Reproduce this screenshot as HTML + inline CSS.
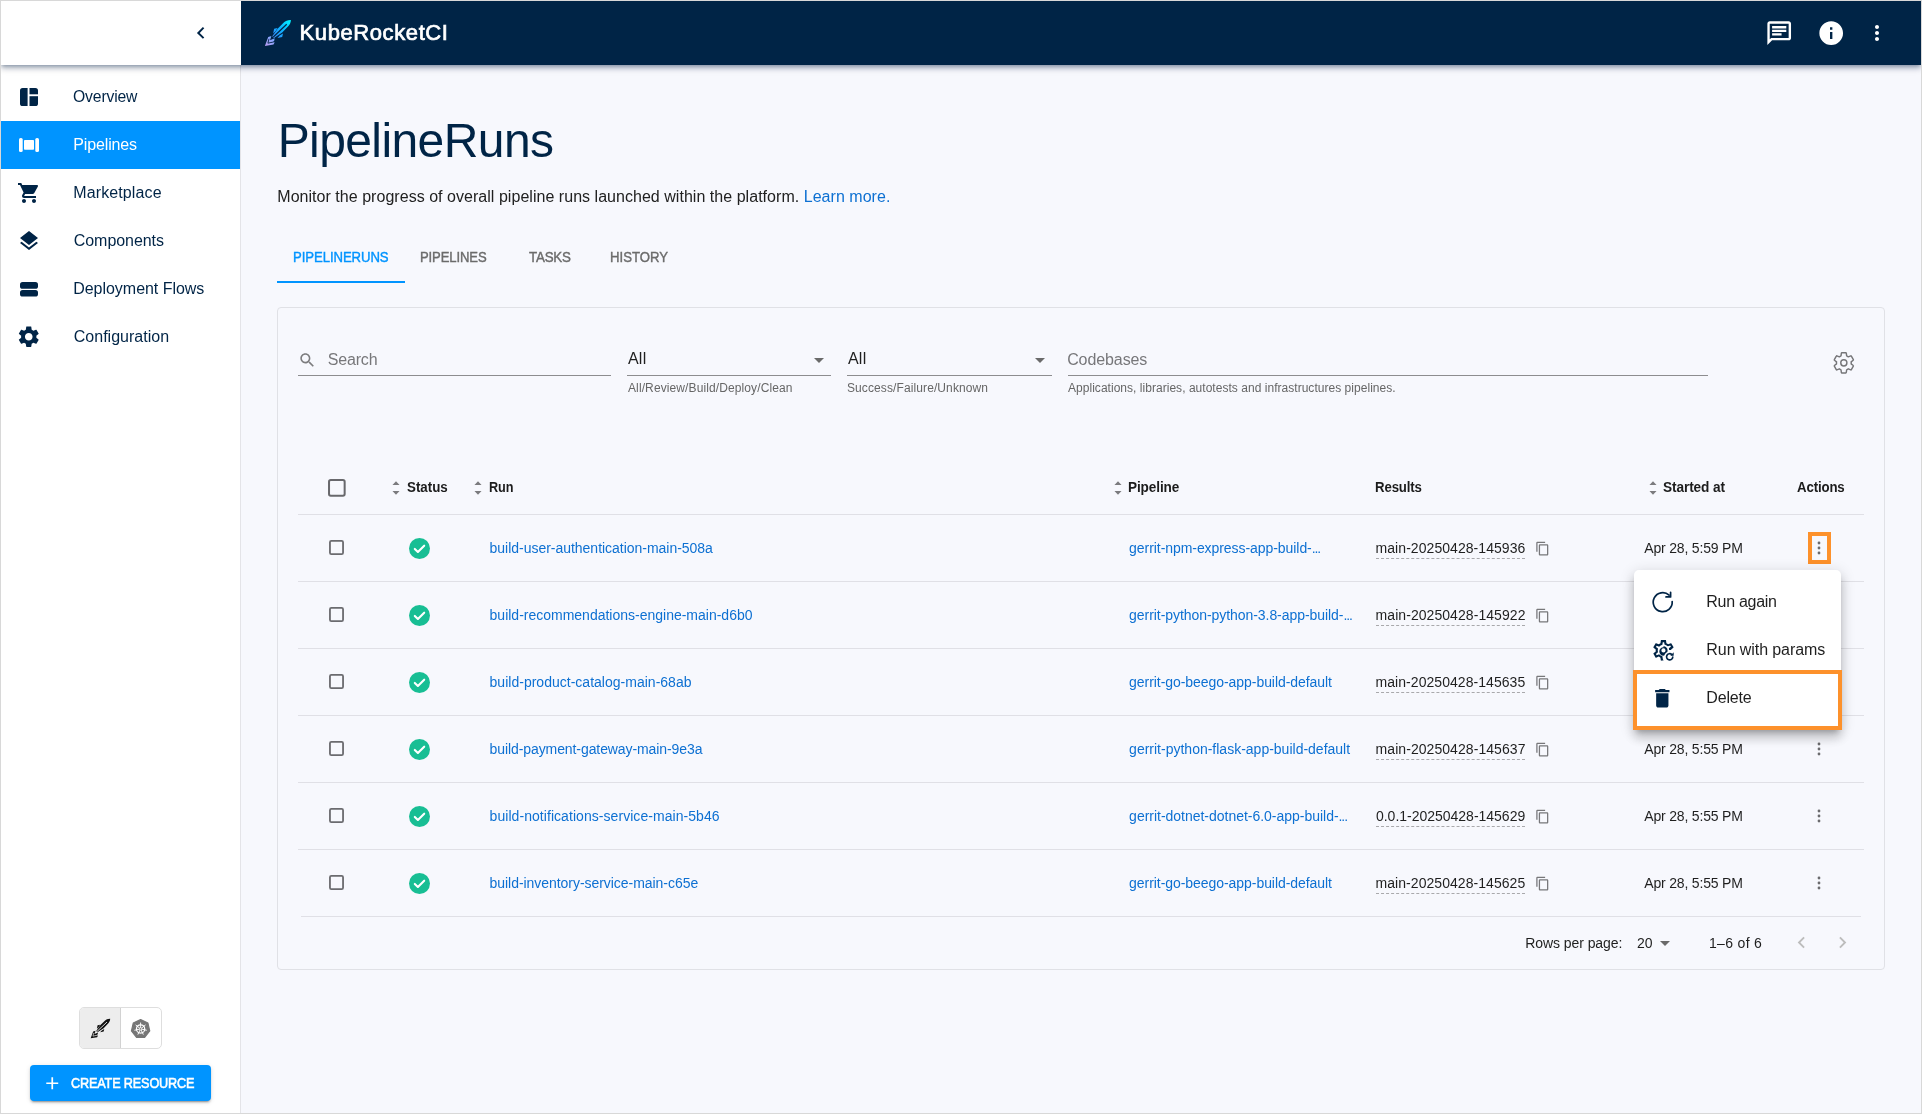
<!DOCTYPE html>
<html lang="en"><head><meta charset="utf-8"><title>KubeRocketCI - PipelineRuns</title>
<style>
html,body{margin:0;padding:0;background:#fff}
body{width:1922px;height:1114px;overflow:hidden;position:relative;font-family:"Liberation Sans", Arial, sans-serif;}
#frame{position:absolute;left:0;top:0;width:1922px;height:1114px;overflow:hidden;background:#f7f8fd;will-change:transform}
#frame div,#frame span.t,#frame svg.ic{position:absolute}
.t{white-space:nowrap;line-height:1;}
.ic{display:block;overflow:visible}
#edge{left:0;top:0;width:1920px;height:1112px;border:1px solid #d8d8d8;z-index:50}
.hl{height:1px;background:#e0e0e6}
.ul{height:1px;background:#8d8d8f}
.cb{box-sizing:border-box;border:1.9px solid #636367;border-radius:2.500px}

</style></head><body><div id="frame">
<div style="left:1px;top:1px;width:1920px;height:64px;background:#002446;box-shadow:0 2px 4px -1px rgba(0,28,64,.34),0 4px 5px 0 rgba(0,28,64,.17),0 1px 10px 0 rgba(0,28,64,.13);z-index:5"></div>
<div style="left:1px;top:65px;width:239px;height:1048px;background:#fff;border-right:1px solid #e4e4e8;z-index:1"></div>
<div style="left:1px;top:1px;width:240px;height:64px;background:#fff;z-index:6"></div>
<div style="left:0;top:0;width:1922px;height:66px;z-index:7">
<svg class="ic" style="left:188.70px;top:20.90px;width:23.80px;height:23.80px;" viewBox="0 0 24 24"><path fill="#002446" d="M15.41 7.41L14 6l-6 6 6 6 1.41-1.41L10.83 12z"/></svg>
<svg class="ic" style="left:260.00px;top:15.00px;width:36.00px;height:36.00px" viewBox="0 0 36 36"><defs><linearGradient id="rg" gradientUnits="userSpaceOnUse" x1="30.700" y1="5.200" x2="5" y2="30.800"><stop offset="0" stop-color="#00f5ff"/><stop offset=".33" stop-color="#0ab6ff"/><stop offset=".6" stop-color="#2b94ff"/><stop offset=".74" stop-color="#8aa6ff"/><stop offset="1" stop-color="#bb9cf0"/></linearGradient></defs>
<g fill="url(#rg)"><path d="M30.900 5c-3.300-.1-5.400 1-7.100 2.600L17.600 13.800 12.300 21.300l1.700 1.700 8.200-5.400 6-6.300c1.600-1.700 2.700-3.700 2.700-6.300z"/>
<path d="M17.600 12.900l-3.500.8-.9 4.700 2.300-2.200zM23 18.500l-.8 3.500-4.700.9 2.200-2.300z"/>
<path d="M4.900 31l3.300-9.100 3.200-.9-1.400 4.300 4.700-2.100-.6 2.700-3.100 1.800 3.700-.4-1.200 2.300z"/></g>
<path d="M26.700 9.300L13.300 22" stroke="#002446" stroke-width="1.200" fill="none"/>
<path d="M9 23.800l-1.100 4.400 4.500-1" stroke="#002446" stroke-width=".9" fill="none"/>
</svg>
<svg class="ic" style="left:1764.80px;top:18.80px;width:28.40px;height:28.40px;" viewBox="0 0 24 24"><path fill="#fff" d="M4 4h16v12H5.17L4 17.17V4m0-2c-1.1 0-1.99.9-1.99 2L2 22l4-4h14c1.1 0 2-.9 2-2V4c0-1.1-.9-2-2-2H4zm2 10h8v2H6v-2zm0-3h12v2H6V9zm0-3h12v2H6V6z"/></svg>
<svg class="ic" style="left:1816.80px;top:18.80px;width:28.40px;height:28.40px;" viewBox="0 0 24 24"><path fill="#fff" d="M12 2C6.48 2 2 6.48 2 12s4.48 10 10 10 10-4.48 10-10S17.52 2 12 2zm1 15h-2v-6h2v6zm0-8h-2V7h2v2z"/></svg>
<svg class="ic" style="left:1865.00px;top:21.20px;width:24.00px;height:24.00px;" viewBox="0 0 24 24"><path fill="#fff" d="M12 8c1.1 0 2-.9 2-2s-.9-2-2-2-2 .9-2 2 .9 2 2 2zm0 2c-1.1 0-2 .9-2 2s.9 2 2 2 2-.9 2-2-.9-2-2-2zm0 6c-1.1 0-2 .9-2 2s.9 2 2 2 2-.9 2-2-.9-2-2-2z"/></svg>
</div>
<div style="left:1px;top:121px;width:239px;height:48px;background:#0094ff;z-index:2"></div>
<div style="left:0;top:0;width:241px;height:1114px;z-index:3">
<svg class="ic" style="left:20px;top:88px;width:18px;height:18px" viewBox="0 0 18 18"><rect width="18" height="18" rx="2.600" fill="#002446"/><rect x="7.600" y="0" width="1.900" height="18" fill="#fff"/><rect x="9" y="6.300" width="9" height="1.900" fill="#fff"/></svg>
<svg class="ic" style="left:19px;top:137px;width:20px;height:16px" viewBox="0 0 20 16"><rect x="0" y="1" width="3.700" height="14" rx="1.600" fill="#fff"/><rect x="16.300" y="1" width="3.700" height="14" rx="1.600" fill="#fff"/><rect x="5" y="3" width="10" height="9.800" rx=".8" fill="#fff"/></svg>
<svg class="ic" style="left:17.00px;top:181.00px;width:24.00px;height:24.00px;" viewBox="0 0 24 24"><path fill="#002446" d="M7 18c-1.1 0-1.99.9-1.99 2S5.9 22 7 22s2-.9 2-2-.9-2-2-2zM1 2v2h2l3.6 7.59-1.35 2.45c-.16.28-.25.61-.25.96 0 1.1.9 2 2 2h12v-2H7.42c-.14 0-.25-.11-.25-.25l.03-.12.9-1.63h7.45c.75 0 1.41-.41 1.75-1.03l3.58-6.49c.08-.14.12-.31.12-.48 0-.55-.45-1-1-1H5.21l-.94-2H1zm16 16c-1.1 0-1.99.9-1.99 2s.89 2 1.99 2 2-.9 2-2-.9-2-2-2z"/></svg>
<svg class="ic" style="left:17.00px;top:228.50px;width:24.00px;height:24.00px;" viewBox="0 0 24 24"><path fill="#002446" d="M11.99 18.54l-7.37-5.73L3 14.07l9 7 9-7-1.63-1.27-7.38 5.740zM12 16l7.36-5.73L21 9l-9-7-9 7 1.63 1.27L12 16z"/></svg>
<svg class="ic" style="left:20px;top:282px;width:18px;height:14.500px" viewBox="0 0 18 14.500"><rect width="18" height="6.800" rx="2.600" fill="#002446"/><rect y="7.900" width="18" height="6.600" rx="2.600" fill="#002446"/></svg>
<svg class="ic" style="left:16.25px;top:324.25px;width:25.50px;height:25.50px;" viewBox="0 0 24 24"><path fill="#002446" d="M19.14 12.94c.04-.3.06-.61.06-.94 0-.32-.02-.64-.07-.94l2.03-1.58c.18-.14.23-.41.12-.61l-1.92-3.32c-.12-.22-.37-.29-.59-.22l-2.39.96c-.5-.38-1.03-.7-1.62-.94l-.36-2.54c-.04-.24-.24-.41-.48-.41h-3.84c-.24 0-.43.17-.47.41l-.36 2.54c-.59.24-1.13.57-1.62.94l-2.39-.96c-.22-.08-.47 0-.59.22L2.74 8.87c-.12.21-.08.47.12.61l2.03 1.58c-.05.3-.09.63-.09.94s.02.64.07.94l-2.03 1.58c-.18.14-.23.41-.12.61l1.92 3.32c.12.22.37.29.59.22l2.39-.96c.5.38 1.03.7 1.62.94l.36 2.54c.05.24.24.41.48.41h3.84c.24 0 .44-.17.47-.41l.36-2.54c.59-.24 1.13-.56 1.62-.94l2.39.96c.22.08.47 0 .59-.22l1.92-3.32c.12-.22.07-.47-.12-.61l-2.01-1.58zM12 15.6c-1.98 0-3.6-1.62-3.6-3.600s1.62-3.600 3.6-3.600 3.600 1.620 3.600 3.600-1.620 3.600-3.600 3.600z"/></svg>
<div style="left:79px;top:1007px;width:83px;height:42px;box-sizing:border-box;border:1px solid #dedede;border-radius:5px;background:#fff;overflow:hidden"><div style="left:0;top:0;width:40px;height:40px;background:#ededed;border-right:1px solid #d2d2d2"></div></div>
<svg class="ic" style="left:86.50px;top:1014.50px;width:27.00px;height:27.00px" viewBox="0 0 36 36">
<g fill="#111"><path d="M30.900 5c-3.300-.1-5.400 1-7.100 2.600L17.600 13.800 12.300 21.300l1.700 1.700 8.200-5.400 6-6.300c1.600-1.700 2.700-3.700 2.700-6.300z"/>
<path d="M17.600 12.900l-3.500.8-.9 4.700 2.300-2.200zM23 18.500l-.8 3.500-4.700.9 2.200-2.300z"/>
<path d="M4.900 31l3.300-9.100 3.200-.9-1.400 4.300 4.700-2.100-.6 2.700-3.100 1.800 3.700-.4-1.200 2.300z"/></g>
<path d="M26.700 9.300L13.300 22" stroke="#ededed" stroke-width="1.200" fill="none"/>
<path d="M9 23.800l-1.100 4.400 4.500-1" stroke="#ededed" stroke-width=".9" fill="none"/>
</svg>
<svg class="ic" style="left:131.200px;top:1019px;width:19.200px;height:19.200px" viewBox="0 0 20 20"><polygon points="10.00,0.50 17.66,4.19 19.55,12.48 14.25,19.13 5.75,19.13 0.45,12.48 2.34,4.19" fill="#767676" stroke="#767676" stroke-width="1.200" stroke-linejoin="round"/><circle cx="10" cy="10.300" r="4.300" fill="none" stroke="#fff" stroke-width="1.300"/><path d="M10 10.300L10.00 3.70M10 10.300L15.16 6.18M10 10.300L16.43 11.77M10 10.300L12.86 16.25M10 10.300L7.14 16.25M10 10.300L3.57 11.77M10 10.300L4.84 6.18" stroke="#fff" stroke-width="1" fill="none"/><circle cx="10" cy="10.300" r="1.200" fill="#767676" stroke="#fff" stroke-width=".7"/></svg>
<div style="left:30px;top:1065px;width:181px;height:36px;border-radius:4px;background:#0094ff;box-shadow:0 3px 1px -2px rgba(0,0,0,.2),0 2px 2px 0 rgba(0,0,0,.14),0 1px 5px 0 rgba(0,0,0,.12)"></div>
<svg class="ic" style="left:41.75px;top:1072.75px;width:20.50px;height:20.50px;" viewBox="0 0 24 24"><path fill="#fff" d="M19 13h-6v6h-2v-6H5v-2h6V5h2v6h6v2z"/></svg>
</div>
<div id="main" style="left:0;top:0;width:1922px;height:1114px;z-index:2">
<div style="left:277px;top:281px;width:128px;height:2px;background:#0094ff"></div>
<div style="left:277px;top:307px;width:1608px;height:662.500px;box-sizing:border-box;border:1px solid #e0e1e6;border-radius:4px"></div>
<svg class="ic" style="left:298.10px;top:351.10px;width:18.60px;height:18.60px;" viewBox="0 0 24 24"><path fill="#7c7c7e" d="M15.5 14h-.79l-.28-.27C15.41 12.59 16 11.11 16 9.5 16 5.91 13.09 3 9.5 3S3 5.91 3 9.5 5.91 16 9.5 16c1.61 0 3.09-.59 4.23-1.57l.27.28v.79l5 4.99L20.49 19l-4.99-5zm-6 0C7.01 14 5 11.99 5 9.5S7.01 5 9.5 5 14 7.01 14 9.5 11.99 14 9.5 14z"/></svg>
<div class="ul" style="left:298px;top:375px;width:313px"></div>
<div class="ul" style="left:627px;top:375px;width:204px"></div>
<div class="ul" style="left:847px;top:375px;width:205px"></div>
<div class="ul" style="left:1068px;top:375px;width:640px"></div>
<svg class="ic" style="left:807.00px;top:348.00px;width:24.00px;height:24.00px;" viewBox="0 0 24 24"><path fill="#6a6a6a" d="M7 10l5 5 5-5z"/></svg>
<svg class="ic" style="left:1027.70px;top:348.00px;width:24.00px;height:24.00px;" viewBox="0 0 24 24"><path fill="#6a6a6a" d="M7 10l5 5 5-5z"/></svg>
<svg class="ic" style="left:1831px;top:350px;width:24.600px;height:25.200px" viewBox="0 0 24 24" preserveAspectRatio="none"><g transform="translate(.52 .26)"><path fill="none" stroke="#757578" stroke-width="1.400" stroke-linejoin="round" d="M19.14 12.94c.04-.3.06-.61.06-.94 0-.32-.02-.64-.07-.94l2.03-1.58c.18-.14.23-.41.12-.61l-1.92-3.32c-.12-.22-.37-.29-.59-.22l-2.39.96c-.5-.38-1.03-.7-1.62-.94l-.36-2.54c-.04-.24-.24-.41-.48-.41h-3.84c-.24 0-.43.17-.47.41l-.36 2.54c-.59.24-1.13.57-1.62.94l-2.39-.96c-.22-.08-.47 0-.59.22L2.74 8.87c-.12.21-.08.47.12.61l2.03 1.58c-.05.3-.09.63-.09.94s.02.64.07.94l-2.03 1.58c-.18.14-.23.41-.12.61l1.92 3.32c.12.22.37.29.59.22l2.39-.96c.5.38 1.03.7 1.62.94l.36 2.54c.05.24.24.41.48.41h3.84c.24 0 .44-.17.47-.41l.36-2.54c.59-.24 1.13-.56 1.62-.94l2.39.96c.22.08.47 0 .59-.22l1.92-3.32c.12-.22.07-.47-.12-.61l-2.01-1.58z"/><circle cx="12" cy="12" r="3" fill="none" stroke="#757578" stroke-width="1.400"/></g></svg>
<svg class="ic" style="left:328.300px;top:479.200px;width:17.700px;height:17.700px" viewBox="0 0 18 18"><rect x="1.050" y="1.050" width="15.900" height="15.900" rx="1.800" fill="none" stroke="#68686c" stroke-width="2.050"/></svg>
<svg class="ic" style="left:392.05px;top:481px;width:8px;height:14px" viewBox="0 0 8 14"><path fill="#7b7b7e" d="M.45 4L7.550 4 4 .2zM.45 10L7.550 10 4 13.800z"/></svg>
<svg class="ic" style="left:474.40px;top:481px;width:8px;height:14px" viewBox="0 0 8 14"><path fill="#7b7b7e" d="M.45 4L7.550 4 4 .2zM.45 10L7.550 10 4 13.800z"/></svg>
<svg class="ic" style="left:1113.60px;top:481px;width:8px;height:14px" viewBox="0 0 8 14"><path fill="#7b7b7e" d="M.45 4L7.550 4 4 .2zM.45 10L7.550 10 4 13.800z"/></svg>
<svg class="ic" style="left:1649.20px;top:481px;width:8px;height:14px" viewBox="0 0 8 14"><path fill="#7b7b7e" d="M.45 4L7.550 4 4 .2zM.45 10L7.550 10 4 13.800z"/></svg>
<div class="hl" style="left:298px;top:514px;width:1566px"></div>
<div class="hl" style="left:298px;top:581px;width:1566px"></div>
<svg class="ic" style="left:329.200px;top:540.4px;width:15px;height:15px" viewBox="0 0 15 15"><rect x=".95" y=".95" width="13.100" height="13.100" rx="1.400" fill="none" stroke="#6b6b6f" stroke-width="1.800"/></svg>
<svg class="ic" style="left:409px;top:537.8px;width:21px;height:21px" viewBox="0 0 21 21"><circle cx="10.500" cy="10.500" r="10.500" fill="#18be94"/><path d="M5.800 10.900l3.100 3.100 6.300-6.300" fill="none" stroke="#fff" stroke-width="2.100" stroke-linecap="round" stroke-linejoin="round"/></svg>
<div style="left:1376px;top:558px;width:149px;height:0;border-top:1px dashed #a9a9ac"></div>
<svg class="ic" style="left:1535.20px;top:541.10px;width:15.20px;height:15.20px;" viewBox="0 0 24 24"><path fill="#77777a" d="M16 1H4c-1.1 0-2 .9-2 2v14h2V3h12V1zm3 4H8c-1.1 0-2 .9-2 2v14c0 1.1.9 2 2 2h11c1.1 0 2-.9 2-2V7c0-1.1-.9-2-2-2zm0 16H8V7h11v14z"/></svg>
<div class="hl" style="left:298px;top:648px;width:1566px"></div>
<svg class="ic" style="left:329.200px;top:607.4px;width:15px;height:15px" viewBox="0 0 15 15"><rect x=".95" y=".95" width="13.100" height="13.100" rx="1.400" fill="none" stroke="#6b6b6f" stroke-width="1.800"/></svg>
<svg class="ic" style="left:409px;top:604.8px;width:21px;height:21px" viewBox="0 0 21 21"><circle cx="10.500" cy="10.500" r="10.500" fill="#18be94"/><path d="M5.800 10.900l3.100 3.100 6.300-6.300" fill="none" stroke="#fff" stroke-width="2.100" stroke-linecap="round" stroke-linejoin="round"/></svg>
<div style="left:1376px;top:625px;width:149px;height:0;border-top:1px dashed #a9a9ac"></div>
<svg class="ic" style="left:1535.20px;top:608.10px;width:15.20px;height:15.20px;" viewBox="0 0 24 24"><path fill="#77777a" d="M16 1H4c-1.1 0-2 .9-2 2v14h2V3h12V1zm3 4H8c-1.1 0-2 .9-2 2v14c0 1.1.9 2 2 2h11c1.1 0 2-.9 2-2V7c0-1.1-.9-2-2-2zm0 16H8V7h11v14z"/></svg>
<div class="hl" style="left:298px;top:715px;width:1566px"></div>
<svg class="ic" style="left:329.200px;top:674.4px;width:15px;height:15px" viewBox="0 0 15 15"><rect x=".95" y=".95" width="13.100" height="13.100" rx="1.400" fill="none" stroke="#6b6b6f" stroke-width="1.800"/></svg>
<svg class="ic" style="left:409px;top:671.8px;width:21px;height:21px" viewBox="0 0 21 21"><circle cx="10.500" cy="10.500" r="10.500" fill="#18be94"/><path d="M5.800 10.900l3.100 3.100 6.300-6.300" fill="none" stroke="#fff" stroke-width="2.100" stroke-linecap="round" stroke-linejoin="round"/></svg>
<div style="left:1376px;top:692px;width:149px;height:0;border-top:1px dashed #a9a9ac"></div>
<svg class="ic" style="left:1535.20px;top:675.10px;width:15.20px;height:15.20px;" viewBox="0 0 24 24"><path fill="#77777a" d="M16 1H4c-1.1 0-2 .9-2 2v14h2V3h12V1zm3 4H8c-1.1 0-2 .9-2 2v14c0 1.1.9 2 2 2h11c1.1 0 2-.9 2-2V7c0-1.1-.9-2-2-2zm0 16H8V7h11v14z"/></svg>
<div class="hl" style="left:298px;top:782px;width:1566px"></div>
<svg class="ic" style="left:329.200px;top:741.4px;width:15px;height:15px" viewBox="0 0 15 15"><rect x=".95" y=".95" width="13.100" height="13.100" rx="1.400" fill="none" stroke="#6b6b6f" stroke-width="1.800"/></svg>
<svg class="ic" style="left:409px;top:738.8px;width:21px;height:21px" viewBox="0 0 21 21"><circle cx="10.500" cy="10.500" r="10.500" fill="#18be94"/><path d="M5.800 10.900l3.100 3.100 6.300-6.300" fill="none" stroke="#fff" stroke-width="2.100" stroke-linecap="round" stroke-linejoin="round"/></svg>
<div style="left:1376px;top:759px;width:149px;height:0;border-top:1px dashed #a9a9ac"></div>
<svg class="ic" style="left:1535.20px;top:742.10px;width:15.20px;height:15.20px;" viewBox="0 0 24 24"><path fill="#77777a" d="M16 1H4c-1.1 0-2 .9-2 2v14h2V3h12V1zm3 4H8c-1.1 0-2 .9-2 2v14c0 1.1.9 2 2 2h11c1.1 0 2-.9 2-2V7c0-1.1-.9-2-2-2zm0 16H8V7h11v14z"/></svg>
<svg class="ic" style="left:1816.00px;top:741.10px;width:6px;height:16px" viewBox="0 0 6 16"><g fill="#6b6b6e"><circle cx="3" cy="3" r="1.400"/><circle cx="3" cy="8" r="1.400"/><circle cx="3" cy="13" r="1.400"/></g></svg>
<div class="hl" style="left:298px;top:849px;width:1566px"></div>
<svg class="ic" style="left:329.200px;top:808.4px;width:15px;height:15px" viewBox="0 0 15 15"><rect x=".95" y=".95" width="13.100" height="13.100" rx="1.400" fill="none" stroke="#6b6b6f" stroke-width="1.800"/></svg>
<svg class="ic" style="left:409px;top:805.8px;width:21px;height:21px" viewBox="0 0 21 21"><circle cx="10.500" cy="10.500" r="10.500" fill="#18be94"/><path d="M5.800 10.900l3.100 3.100 6.300-6.300" fill="none" stroke="#fff" stroke-width="2.100" stroke-linecap="round" stroke-linejoin="round"/></svg>
<div style="left:1376px;top:826px;width:149px;height:0;border-top:1px dashed #a9a9ac"></div>
<svg class="ic" style="left:1535.20px;top:809.10px;width:15.20px;height:15.20px;" viewBox="0 0 24 24"><path fill="#77777a" d="M16 1H4c-1.1 0-2 .9-2 2v14h2V3h12V1zm3 4H8c-1.1 0-2 .9-2 2v14c0 1.1.9 2 2 2h11c1.1 0 2-.9 2-2V7c0-1.1-.9-2-2-2zm0 16H8V7h11v14z"/></svg>
<svg class="ic" style="left:1816.00px;top:808.10px;width:6px;height:16px" viewBox="0 0 6 16"><g fill="#6b6b6e"><circle cx="3" cy="3" r="1.400"/><circle cx="3" cy="8" r="1.400"/><circle cx="3" cy="13" r="1.400"/></g></svg>
<div class="hl" style="left:301px;top:916px;width:1560px"></div>
<svg class="ic" style="left:329.200px;top:875.4px;width:15px;height:15px" viewBox="0 0 15 15"><rect x=".95" y=".95" width="13.100" height="13.100" rx="1.400" fill="none" stroke="#6b6b6f" stroke-width="1.800"/></svg>
<svg class="ic" style="left:409px;top:872.8px;width:21px;height:21px" viewBox="0 0 21 21"><circle cx="10.500" cy="10.500" r="10.500" fill="#18be94"/><path d="M5.800 10.900l3.100 3.100 6.300-6.300" fill="none" stroke="#fff" stroke-width="2.100" stroke-linecap="round" stroke-linejoin="round"/></svg>
<div style="left:1376px;top:893px;width:149px;height:0;border-top:1px dashed #a9a9ac"></div>
<svg class="ic" style="left:1535.20px;top:876.10px;width:15.20px;height:15.20px;" viewBox="0 0 24 24"><path fill="#77777a" d="M16 1H4c-1.1 0-2 .9-2 2v14h2V3h12V1zm3 4H8c-1.1 0-2 .9-2 2v14c0 1.1.9 2 2 2h11c1.1 0 2-.9 2-2V7c0-1.1-.9-2-2-2zm0 16H8V7h11v14z"/></svg>
<svg class="ic" style="left:1816.00px;top:875.10px;width:6px;height:16px" viewBox="0 0 6 16"><g fill="#6b6b6e"><circle cx="3" cy="3" r="1.400"/><circle cx="3" cy="8" r="1.400"/><circle cx="3" cy="13" r="1.400"/></g></svg>
<div style="left:1808px;top:532px;width:23px;height:32px;box-sizing:border-box;border:4px solid #fd912b"></div>
<svg class="ic" style="left:1816.20px;top:540.30px;width:6px;height:16px" viewBox="0 0 6 16"><g fill="#6b6b6e"><circle cx="3" cy="3" r="1.400"/><circle cx="3" cy="8" r="1.400"/><circle cx="3" cy="13" r="1.400"/></g></svg>
<svg class="ic" style="left:1653.30px;top:931.30px;width:24.00px;height:24.00px;" viewBox="0 0 24 24"><path fill="#6a6a6a" d="M7 10l5 5 5-5z"/></svg>
<svg class="ic" style="left:1790.10px;top:931.30px;width:23.00px;height:23.00px;" viewBox="0 0 24 24"><path fill="#bdbdbd" d="M15.41 7.41L14 6l-6 6 6 6 1.41-1.41L10.83 12z"/></svg>
<svg class="ic" style="left:1830.70px;top:931.30px;width:23.00px;height:23.00px;" viewBox="0 0 24 24"><path fill="#bdbdbd" d="M10 6L8.59 7.41 13.17 12l-4.58 4.59L10 18l6-6z"/></svg>
</div>
<div style="left:1634px;top:570px;width:206.800px;height:160px;background:#fff;border-radius:5px;z-index:20;box-shadow:0 5px 5px -3px rgba(0,0,0,.2),0 8px 10px 1px rgba(0,0,0,.14),0 3px 14px 2px rgba(0,0,0,.12)"></div>
<div style="left:0;top:0;width:1922px;height:1114px;z-index:21">
<svg class="ic" style="left:1650.900px;top:590.400px;width:24px;height:24px" viewBox="0 0 24 24"><path d="M21.200 11.500a9.500 9.500 0 1 1-3.100-6.400" fill="none" stroke="#002446" stroke-width="1.700" stroke-linecap="round"/><path d="M19.600 2.300v4.600h-4.600" fill="none" stroke="#002446" stroke-width="1.700" stroke-linecap="round" stroke-linejoin="round"/></svg>
<svg class="ic" style="left:1650.500px;top:637.900px;width:24.900px;height:24.900px" viewBox="0 0 24 24"><path fill="#002446" d="M12 8a4 4 0 0 1 4 4c0 .5-.1 1-.28 1.470-.53.280-1.020.640-1.440 1.060-.7.670-1.220 1.510-1.520 2.440-.25.030-.5.030-.76.030a4 4 0 0 1 0-8zm0 2a2 2 0 1 0 0 4 2 2 0 0 0 0-4zM10 22c-.25 0-.46-.18-.5-.42l-.37-2.650c-.63-.25-1.170-.59-1.690-.99l-2.490 1.010c-.22.080-.49 0-.61-.22l-2-3.460c-.13-.22-.07-.49.120-.64l2.110-1.660L4.500 12l.07-1-2.110-1.630c-.19-.15-.25-.42-.12-.64l2-3.460c.12-.22.390-.31.610-.22l2.490 1c.52-.39 1.060-.73 1.690-.98l.37-2.650c.04-.24.250-.42.500-.42h4c.25 0 .46.180.5.420l.37 2.650c.63.250 1.170.590 1.690.980l2.490-1c.22-.09.490 0 .61.220l2 3.460c.13.220.07.490-.120.640L19.430 11l.05.660c-.48-.1-.98-.16-1.480-.16h-.54c-.020-.170-.040-.340-.070-.500l-.140-1.130.890-.700 1.080-.840-.700-1.210-1.270.510-1.040.420-.900-.680c-.430-.320-.840-.560-1.250-.730l-1.060-.430-.160-1.130L12.650 4h-1.300l-.190 1.350-.160 1.130-1.060.430c-.43.180-.83.410-1.230.710l-.910.700-1.060-.43-1.270-.51-.700 1.210 1.080.84.890.7-.14 1.130c-.03.310-.05.540-.05.740s.02.430.05.730l.14 1.130-.89.700-1.080.84.700 1.210 1.270-.51 1.040-.42.900.68c.43.320.84.560 1.250.730l1.060.43.160 1.130.120.800c.12.810.42 1.570.86 2.230H10z"/><path fill="none" stroke="#002446" stroke-width="1.600" stroke-linecap="round" d="M21 18.300a3 3 0 1 1-.900-2.300"/><path fill="#002446" d="M21.900 13.700v3.300h-3.300z"/></svg>
<svg class="ic" style="left:1650.30px;top:685.90px;width:24.60px;height:24.60px;" viewBox="0 0 24 24"><path fill="#002446" d="M6 19c0 1.1.9 2 2 2h8c1.1 0 2-.9 2-2V7H6v12zM19 4h-3.5l-1-1h-5l-1 1H5v2h14V4z"/></svg>
<div style="left:1633px;top:670px;width:209px;height:60px;box-sizing:border-box;border:4px solid #fd912b"></div>
</div>
<span class="t" id="t0" style="left:73.32px;top:88.90px;font-size:16px;font-weight:400;color:#002446;letter-spacing:-0.150px;z-index:8;transform:scaleX(0.9823);transform-origin:0 50%;">Overview</span>
<span class="t" id="t1" style="left:73.24px;top:136.90px;font-size:16px;font-weight:400;color:#fff;letter-spacing:-0.130px;z-index:8;">Pipelines</span>
<span class="t" id="t2" style="left:73.24px;top:184.90px;font-size:16px;font-weight:400;color:#002446;letter-spacing:0.118px;z-index:8;">Marketplace</span>
<span class="t" id="t3" style="left:73.77px;top:232.90px;font-size:16px;font-weight:400;color:#002446;letter-spacing:-0.053px;z-index:8;">Components</span>
<span class="t" id="t4" style="left:73.24px;top:280.90px;font-size:16px;font-weight:400;color:#002446;letter-spacing:-0.033px;z-index:8;">Deployment Flows</span>
<span class="t" id="t5" style="left:73.77px;top:328.90px;font-size:16px;font-weight:400;color:#002446;letter-spacing:0.010px;z-index:8;">Configuration</span>
<span class="t" id="t6" style="left:71.00px;top:1076.30px;font-size:14px;font-weight:400;color:#fff;letter-spacing:-0.171px;z-index:8;-webkit-text-stroke:.55px currentColor;transform:scaleX(0.9042);transform-origin:0 50%;">CREATE RESOURCE</span>
<span class="t" id="t7" style="left:299.54px;top:21.50px;font-size:22px;font-weight:400;color:#fff;letter-spacing:0.597px;z-index:8;-webkit-text-stroke:.7px currentColor;">KubeRocketCI</span>
<span class="t" id="t8" style="left:277.63px;top:116.50px;font-size:48px;font-weight:400;color:#002446;letter-spacing:-0.586px;z-index:8;">PipelineRuns</span>
<span class="t" id="t9" style="left:277.31px;top:188.50px;font-size:16px;font-weight:400;color:#212121;letter-spacing:0.034px;z-index:8;">Monitor the progress of overall pipeline runs launched within the platform. <span style="color:#0d70d2">Learn more.</span></span>
<span class="t" id="t10" style="left:292.91px;top:250.30px;font-size:14px;font-weight:400;color:#0094ff;letter-spacing:-0.088px;z-index:8;-webkit-text-stroke:.4px currentColor;transform:scaleX(0.9398);transform-origin:0 50%;">PIPELINERUNS</span>
<span class="t" id="t11" style="left:420.44px;top:250.30px;font-size:14px;font-weight:400;color:#6b6b6b;letter-spacing:-0.129px;z-index:8;-webkit-text-stroke:.4px currentColor;transform:scaleX(0.9344);transform-origin:0 50%;">PIPELINES</span>
<span class="t" id="t12" style="left:528.50px;top:250.30px;font-size:14px;font-weight:400;color:#6b6b6b;letter-spacing:-0.217px;z-index:8;-webkit-text-stroke:.4px currentColor;transform:scaleX(0.9529);transform-origin:0 50%;">TASKS</span>
<span class="t" id="t13" style="left:609.91px;top:250.30px;font-size:14px;font-weight:400;color:#6b6b6b;letter-spacing:0.010px;z-index:8;-webkit-text-stroke:.4px currentColor;transform:scaleX(0.9391);transform-origin:0 50%;">HISTORY</span>
<span class="t" id="t14" style="left:327.66px;top:351.50px;font-size:16px;font-weight:400;color:#77777a;letter-spacing:-0.147px;z-index:8;">Search</span>
<span class="t" id="t15" style="left:628.00px;top:350.50px;font-size:16px;font-weight:400;color:#1f1f1f;letter-spacing:0.200px;z-index:8;">All</span>
<span class="t" id="t16" style="left:848.00px;top:350.50px;font-size:16px;font-weight:400;color:#1f1f1f;letter-spacing:0.200px;z-index:8;">All</span>
<span class="t" id="t17" style="left:1067.14px;top:351.50px;font-size:16px;font-weight:400;color:#77777a;letter-spacing:-0.087px;z-index:8;">Codebases</span>
<span class="t" id="t18" style="left:628.00px;top:382.00px;font-size:12px;font-weight:400;color:#666;letter-spacing:0.108px;z-index:8;">All/Review/Build/Deploy/Clean</span>
<span class="t" id="t19" style="left:846.93px;top:382.00px;font-size:12px;font-weight:400;color:#666;letter-spacing:0.108px;z-index:8;">Success/Failure/Unknown</span>
<span class="t" id="t20" style="left:1068.00px;top:382.00px;font-size:12px;font-weight:400;color:#666;letter-spacing:0.033px;z-index:8;">Applications, libraries, autotests and infrastructures pipelines.</span>
<span class="t" id="t21" style="left:406.97px;top:480.30px;font-size:14px;font-weight:700;color:#1c1c1c;letter-spacing:-0.020px;z-index:8;transform:scaleX(0.9530);transform-origin:0 50%;">Status</span>
<span class="t" id="t22" style="left:489.11px;top:480.30px;font-size:14px;font-weight:700;color:#1c1c1c;letter-spacing:-0.073px;z-index:8;transform:scaleX(0.9062);transform-origin:0 50%;">Run</span>
<span class="t" id="t23" style="left:1128.38px;top:480.30px;font-size:14px;font-weight:700;color:#1c1c1c;letter-spacing:-0.109px;z-index:8;transform:scaleX(0.9693);transform-origin:0 50%;">Pipeline</span>
<span class="t" id="t24" style="left:1375.47px;top:480.30px;font-size:14px;font-weight:700;color:#1c1c1c;letter-spacing:-0.136px;z-index:8;transform:scaleX(0.9437);transform-origin:0 50%;">Results</span>
<span class="t" id="t25" style="left:1663.44px;top:480.30px;font-size:14px;font-weight:700;color:#1c1c1c;letter-spacing:-0.105px;z-index:8;transform:scaleX(0.9754);transform-origin:0 50%;">Started at</span>
<span class="t" id="t26" style="left:1796.50px;top:480.30px;font-size:14px;font-weight:700;color:#1c1c1c;letter-spacing:-0.151px;z-index:8;transform:scaleX(0.9458);transform-origin:0 50%;">Actions</span>
<span class="t" id="t27" style="left:489.57px;top:541.30px;font-size:14px;font-weight:400;color:#0d70d2;letter-spacing:-0.023px;z-index:8;">build-user-authentication-main-508a</span>
<span class="t" id="t28" style="left:1129.11px;top:541.30px;font-size:14px;font-weight:400;color:#0d70d2;letter-spacing:-0.062px;z-index:8;">gerrit-npm-express-app-build-<span style="letter-spacing:-1.100px">...</span></span>
<span class="t" id="t29" style="left:1375.57px;top:541.30px;font-size:14px;font-weight:400;color:#1f1f1f;letter-spacing:0.056px;z-index:8;">main-20250428-145936</span>
<span class="t" id="t30" style="left:1644.34px;top:541.30px;font-size:14px;font-weight:400;color:#1f1f1f;letter-spacing:-0.189px;z-index:8;">Apr 28, 5:59 PM</span>
<span class="t" id="t31" style="left:489.57px;top:608.30px;font-size:14px;font-weight:400;color:#0d70d2;letter-spacing:-0.003px;z-index:8;">build-recommendations-engine-main-d6b0</span>
<span class="t" id="t32" style="left:1129.11px;top:608.30px;font-size:14px;font-weight:400;color:#0d70d2;letter-spacing:-0.059px;z-index:8;">gerrit-python-python-3.8-app-build-<span style="letter-spacing:-1.100px">...</span></span>
<span class="t" id="t33" style="left:1375.57px;top:608.30px;font-size:14px;font-weight:400;color:#1f1f1f;letter-spacing:0.062px;z-index:8;">main-20250428-145922</span>
<span class="t cov" id="t34" style="left:1644.34px;top:608.30px;font-size:14px;font-weight:400;color:#1f1f1f;letter-spacing:-0.189px;z-index:8;">Apr 28, 5:59 PM</span>
<span class="t" id="t35" style="left:489.57px;top:675.30px;font-size:14px;font-weight:400;color:#0d70d2;letter-spacing:0.012px;z-index:8;">build-product-catalog-main-68ab</span>
<span class="t" id="t36" style="left:1129.11px;top:675.30px;font-size:14px;font-weight:400;color:#0d70d2;letter-spacing:-0.056px;z-index:8;">gerrit-go-beego-app-build-default</span>
<span class="t" id="t37" style="left:1375.57px;top:675.30px;font-size:14px;font-weight:400;color:#1f1f1f;letter-spacing:0.053px;z-index:8;">main-20250428-145635</span>
<span class="t cov" id="t38" style="left:1644.34px;top:675.30px;font-size:14px;font-weight:400;color:#1f1f1f;letter-spacing:-0.189px;z-index:8;">Apr 28, 5:56 PM</span>
<span class="t" id="t39" style="left:489.57px;top:742.30px;font-size:14px;font-weight:400;color:#0d70d2;letter-spacing:-0.088px;z-index:8;">build-payment-gateway-main-9e3a</span>
<span class="t" id="t40" style="left:1129.11px;top:742.30px;font-size:14px;font-weight:400;color:#0d70d2;letter-spacing:-0.000px;z-index:8;">gerrit-python-flask-app-build-default</span>
<span class="t" id="t41" style="left:1375.57px;top:742.30px;font-size:14px;font-weight:400;color:#1f1f1f;letter-spacing:0.062px;z-index:8;">main-20250428-145637</span>
<span class="t" id="t42" style="left:1644.34px;top:742.30px;font-size:14px;font-weight:400;color:#1f1f1f;letter-spacing:-0.189px;z-index:8;">Apr 28, 5:55 PM</span>
<span class="t" id="t43" style="left:489.57px;top:809.30px;font-size:14px;font-weight:400;color:#0d70d2;letter-spacing:0.056px;z-index:8;">build-notifications-service-main-5b46</span>
<span class="t" id="t44" style="left:1129.11px;top:809.30px;font-size:14px;font-weight:400;color:#0d70d2;letter-spacing:-0.019px;z-index:8;">gerrit-dotnet-dotnet-6.0-app-build-<span style="letter-spacing:-1.100px">...</span></span>
<span class="t" id="t45" style="left:1375.96px;top:809.30px;font-size:14px;font-weight:400;color:#1f1f1f;letter-spacing:-0.011px;z-index:8;">0.0.1-20250428-145629</span>
<span class="t" id="t46" style="left:1644.34px;top:809.30px;font-size:14px;font-weight:400;color:#1f1f1f;letter-spacing:-0.189px;z-index:8;">Apr 28, 5:55 PM</span>
<span class="t" id="t47" style="left:489.57px;top:876.30px;font-size:14px;font-weight:400;color:#0d70d2;letter-spacing:-0.046px;z-index:8;">build-inventory-service-main-c65e</span>
<span class="t" id="t48" style="left:1129.11px;top:876.30px;font-size:14px;font-weight:400;color:#0d70d2;letter-spacing:-0.056px;z-index:8;">gerrit-go-beego-app-build-default</span>
<span class="t" id="t49" style="left:1375.57px;top:876.30px;font-size:14px;font-weight:400;color:#1f1f1f;letter-spacing:0.053px;z-index:8;">main-20250428-145625</span>
<span class="t" id="t50" style="left:1644.34px;top:876.30px;font-size:14px;font-weight:400;color:#1f1f1f;letter-spacing:-0.189px;z-index:8;">Apr 28, 5:55 PM</span>
<span class="t" id="t51" style="left:1525.28px;top:936.00px;font-size:14px;font-weight:400;color:#1f1f1f;letter-spacing:-0.070px;z-index:8;">Rows per page:</span>
<span class="t" id="t52" style="left:1637.05px;top:936.00px;font-size:14px;font-weight:400;color:#1f1f1f;letter-spacing:0.000px;z-index:8;">20</span>
<span class="t" id="t53" style="left:1709.00px;top:936.00px;font-size:14px;font-weight:400;color:#1f1f1f;letter-spacing:0.324px;z-index:8;">1–6 of 6</span>
<span class="t" id="t54" style="left:1706.36px;top:593.80px;font-size:16px;font-weight:400;color:#1f1f1f;letter-spacing:-0.291px;z-index:22;">Run again</span>
<span class="t" id="t55" style="left:1706.36px;top:641.80px;font-size:16px;font-weight:400;color:#1f1f1f;letter-spacing:-0.083px;z-index:22;">Run with params</span>
<span class="t" id="t56" style="left:1706.36px;top:689.80px;font-size:16px;font-weight:400;color:#1f1f1f;letter-spacing:-0.213px;z-index:22;">Delete</span>
<div id="edge"></div>
</div></body></html>
